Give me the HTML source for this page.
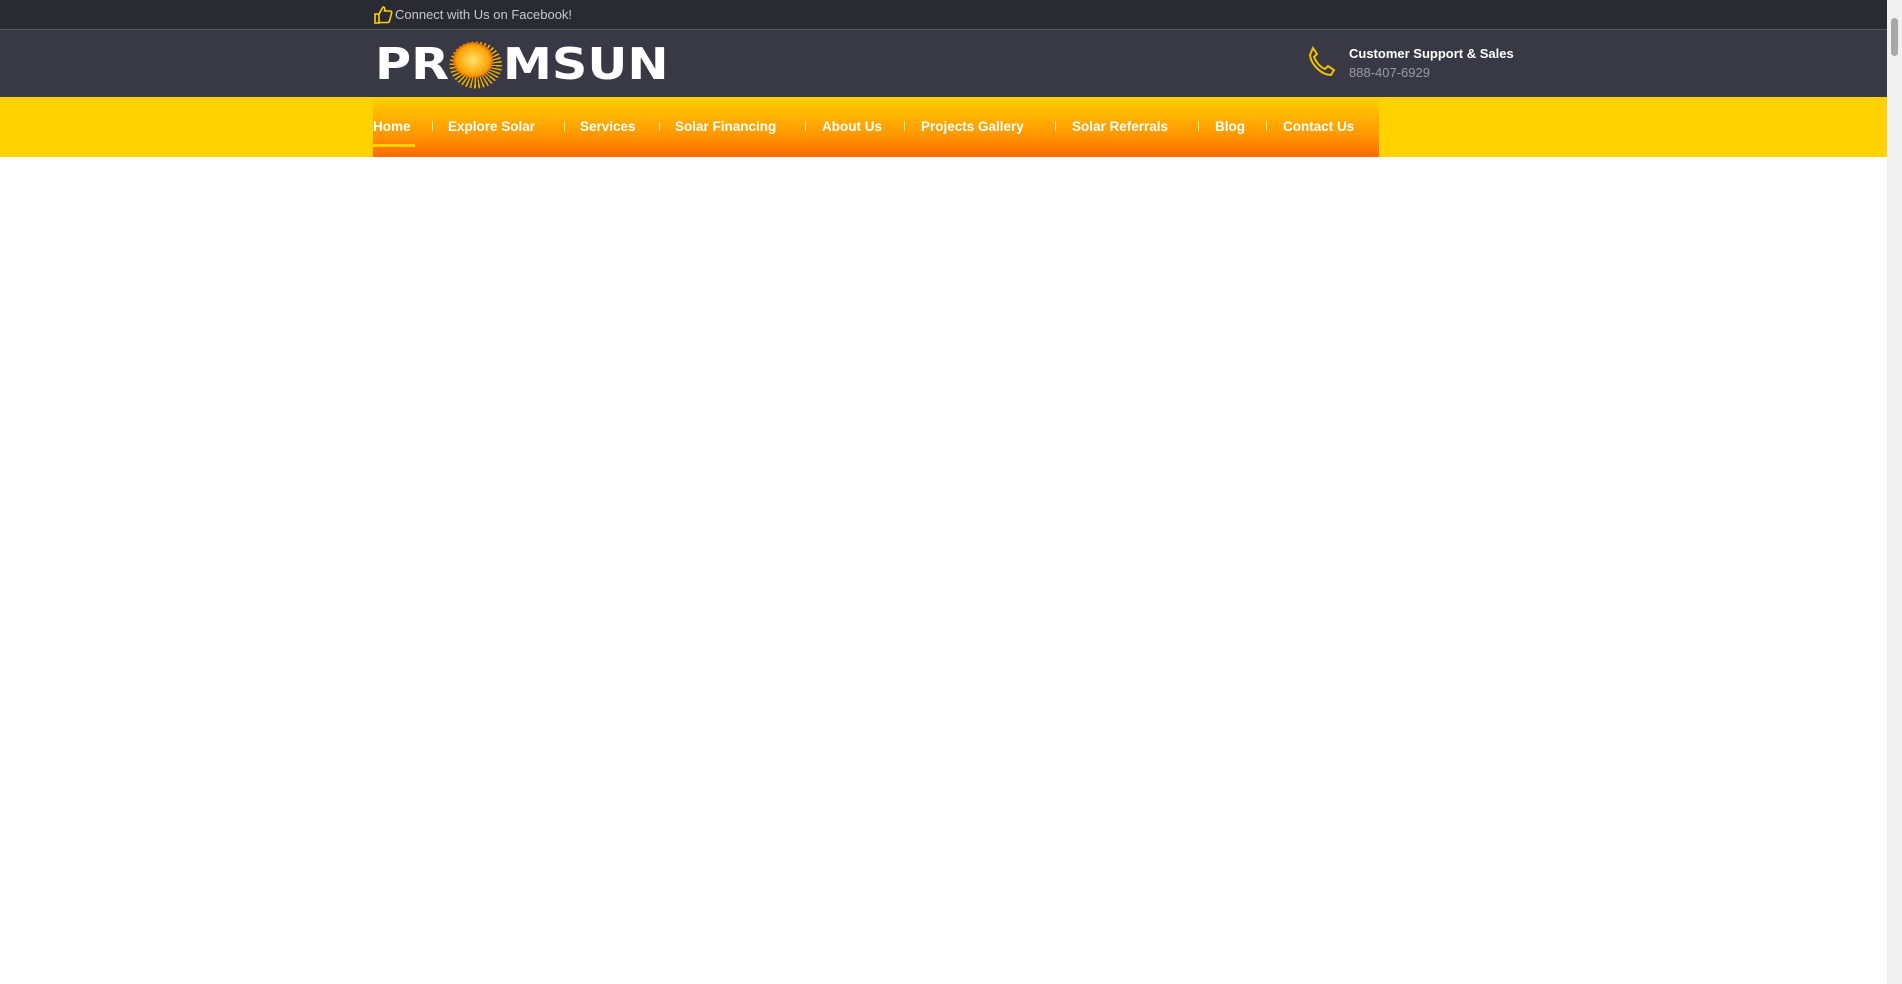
<!DOCTYPE html>
<html><head><style>
*{margin:0;padding:0;box-sizing:border-box}
body{width:1902px;height:984px;background:#fff;overflow:hidden;font-family:"Liberation Sans",sans-serif;position:relative}
.top{position:absolute;left:0;top:0;width:1887px;height:30px;background:#2a2a33;border-bottom:1px solid #55555f}
.top span{position:absolute;left:395px;top:7px;font-size:13px;color:#c8c8cc}
.hdr{position:absolute;left:0;top:30px;width:1887px;height:67px;background:#393945}
.logo{position:absolute;left:375px;top:10px;height:50px;display:flex;align-items:center;font-size:44px;font-weight:bold;color:#fff;font-family:"DejaVu Sans",sans-serif;line-height:50px;transform:scaleX(1.12);transform-origin:left}
.sun{display:inline-block;width:48px;height:48px;border-radius:50%;background:radial-gradient(circle at 45% 40%,#ffe36a,#ffa000 38%,#e07000 44%,transparent 47%),repeating-conic-gradient(#f0b000 0 4deg,transparent 4deg 10deg);-webkit-mask:radial-gradient(circle,#000 68%,transparent 70%);}
.nav{position:absolute;left:0;top:97px;width:1887px;height:60px;background:#ffd200}
.bar{position:absolute;left:373px;top:97px;width:1006px;height:60px;background:linear-gradient(#ffd000,#ff9a00 60%,#ff6a00)}
.bar a{position:absolute;top:22px;color:#fff;font-weight:bold;font-size:13.5px;text-decoration:none;white-space:nowrap}
.sep{position:absolute;top:24px;width:1px;height:10px;background:#ffe9a0}
.ul{position:absolute;left:0;top:47px;width:42px;height:3px;background:#ffd000}
.sb{position:absolute;right:0;top:0;width:15px;height:984px;background:#f1f1f1}
.sb div{position:absolute;left:4px;top:18px;width:7px;height:38px;background:#a8a8a8;border-radius:4px}
</style></head><body>
<div class="top">
<svg style="position:absolute;left:373px;top:5px" width="20" height="20" viewBox="0 0 20 20"><path d="M2 9h4v9H2zM6 9l4-7c2 0 2 2 1.5 4H17c1.5 0 2 1 1.5 2.5l-2 7.5c-.3 1-1 1.5-2 1.5H6" fill="none" stroke="#ffd000" stroke-width="1.6"/></svg>
<span>Connect with Us on Facebook!</span></div>
<div class="hdr">
<div class="logo">PR<span class="sun"></span>MSUN</div>
<svg style="position:absolute;left:1305px;top:16px" width="34" height="36" viewBox="0 0 34 36"><path d="M8 2l4 6-3 3c2 5 6 10 11 12l3-3 6 4-3 5c-9 0-20-10-21-20z" fill="none" stroke="#f0c000" stroke-width="2"/></svg>
<div style="position:absolute;left:1349px;top:16px;color:#fff;font-weight:bold;font-size:13px">Customer Support &amp; Sales</div>
<div style="position:absolute;left:1349px;top:35px;color:#9a9aa4;font-size:13px">888-407-6929</div>
</div>
<div class="nav"></div>
<div class="bar">
<a style="left:0">Home</a><div class="ul"></div>
<div class="sep" style="left:59px"></div><a style="left:75px">Explore Solar</a>
<div class="sep" style="left:191px"></div><a style="left:207px">Services</a>
<div class="sep" style="left:286px"></div><a style="left:302px">Solar Financing</a>
<div class="sep" style="left:432px"></div><a style="left:449px">About Us</a>
<div class="sep" style="left:531px"></div><a style="left:548px">Projects Gallery</a>
<div class="sep" style="left:682px"></div><a style="left:699px">Solar Referrals</a>
<div class="sep" style="left:825px"></div><a style="left:842px">Blog</a>
<div class="sep" style="left:893px"></div><a style="left:910px">Contact Us</a>
</div>
<div class="sb"><div></div></div>
</body></html>
